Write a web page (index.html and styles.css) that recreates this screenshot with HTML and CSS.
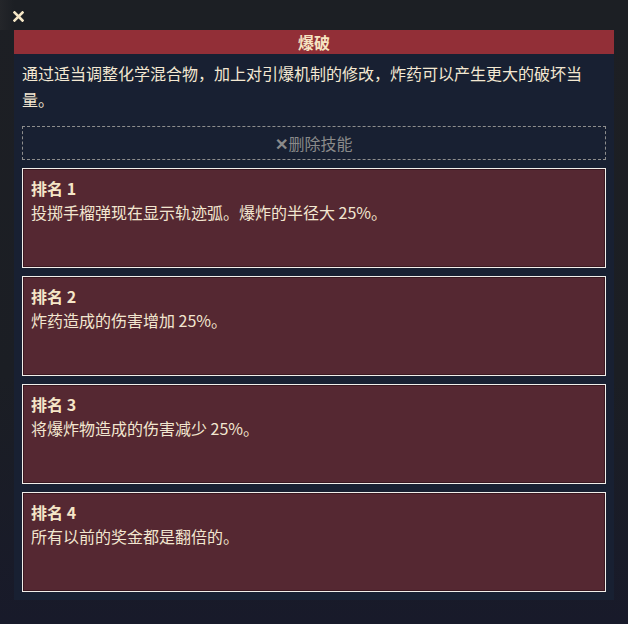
FILE: index.html
```html
<!DOCTYPE html>
<html lang="zh">
<head>
<meta charset="utf-8">
<title>爆破</title>
<link rel="stylesheet" href="styles.css">
</head>
<body>
<div class="topbar">
  <svg class="close" width="11" height="11" viewBox="0 0 11 11"><path d="M1.5 1.5 L9.5 9.5 M9.5 1.5 L1.5 9.5" stroke="#f4e6c6" stroke-width="2.6" stroke-linecap="square"/></svg>
</div>
<div class="panel">
  <div class="panel-head">爆破</div>
  <div class="desc">通过适当调整化学混合物，加上对引爆机制的修改，炸药可以产生更大的破坏当量。</div>
  <div class="remove"><span class="x">✕</span>删除技能</div>
  <div class="ranks">
    <div class="rank">
      <div class="rank-title">排名 1</div>
      <div class="rank-text">投掷手榴弹现在显示轨迹弧。爆炸的半径大 25%。</div>
    </div>
    <div class="rank">
      <div class="rank-title">排名 2</div>
      <div class="rank-text">炸药造成的伤害增加 25%。</div>
    </div>
    <div class="rank">
      <div class="rank-title">排名 3</div>
      <div class="rank-text">将爆炸物造成的伤害减少 25%。</div>
    </div>
    <div class="rank">
      <div class="rank-title">排名 4</div>
      <div class="rank-text">所有以前的奖金都是翻倍的。</div>
    </div>
  </div>
</div>
</body>
</html>
```
FILE: styles.css
```css
html, body {
  margin: 0;
  padding: 0;
}
body {
  width: 628px;
  height: 624px;
  overflow: hidden;
  font-family: "Noto Sans CJK SC", "Noto Sans", sans-serif;
  background:
    linear-gradient(180deg, #2c1f22 0px, #1d1f24 8px, #1b1e24 60%, #181a2a 100%);
  color: #f2e6cf;
}
.topbar {
  height: 30px;
  box-sizing: border-box;
  padding: 11px 0 0 13px;
  background: linear-gradient(90deg, #24262a 0, #1c1f24 14px);
}
.close {
  display: block;
}
.panel {
  margin: 0 14px;
  width: 600px;
  height: 570px;
  box-sizing: border-box;
  background: #182032;
  padding-bottom: 8px;
}
.panel-head {
  height: 24px;
  background: #922f37;
  color: #f6e4c2;
  font-weight: bold;
  font-size: 16px;
  line-height: 24px;
  text-align: center;
}
.desc {
  padding: 0 22px 0 8px;
  margin-top: 6px;
  font-size: 16px;
  line-height: 26px;
  color: #f3e8d2;
}
.remove {
  margin: 14px 8px 0;
  height: 34px;
  box-sizing: border-box;
  border: 1px dashed #8e8e8e;
  color: #8a8a8a;
  font-size: 16px;
  line-height: 32px;
  text-align: center;
}
.remove .x {
  font-weight: bold;
}
.ranks {
  margin: 8px 8px 0;
  display: flex;
  flex-direction: column;
  gap: 8px;
}
.rank {
  height: 100px;
  box-sizing: border-box;
  background: #552832;
  border: 1px solid #f1eeea;
  box-shadow: inset 0 0 0 1px #3a1820;
  padding: 7px 8px 0;
}
.rank-title {
  font-size: 16px;
  font-weight: bold;
  line-height: 24px;
  color: #f5e6c8;
}
.rank-text {
  font-size: 16px;
  line-height: 24px;
  color: #f2e6d0;
}
```
